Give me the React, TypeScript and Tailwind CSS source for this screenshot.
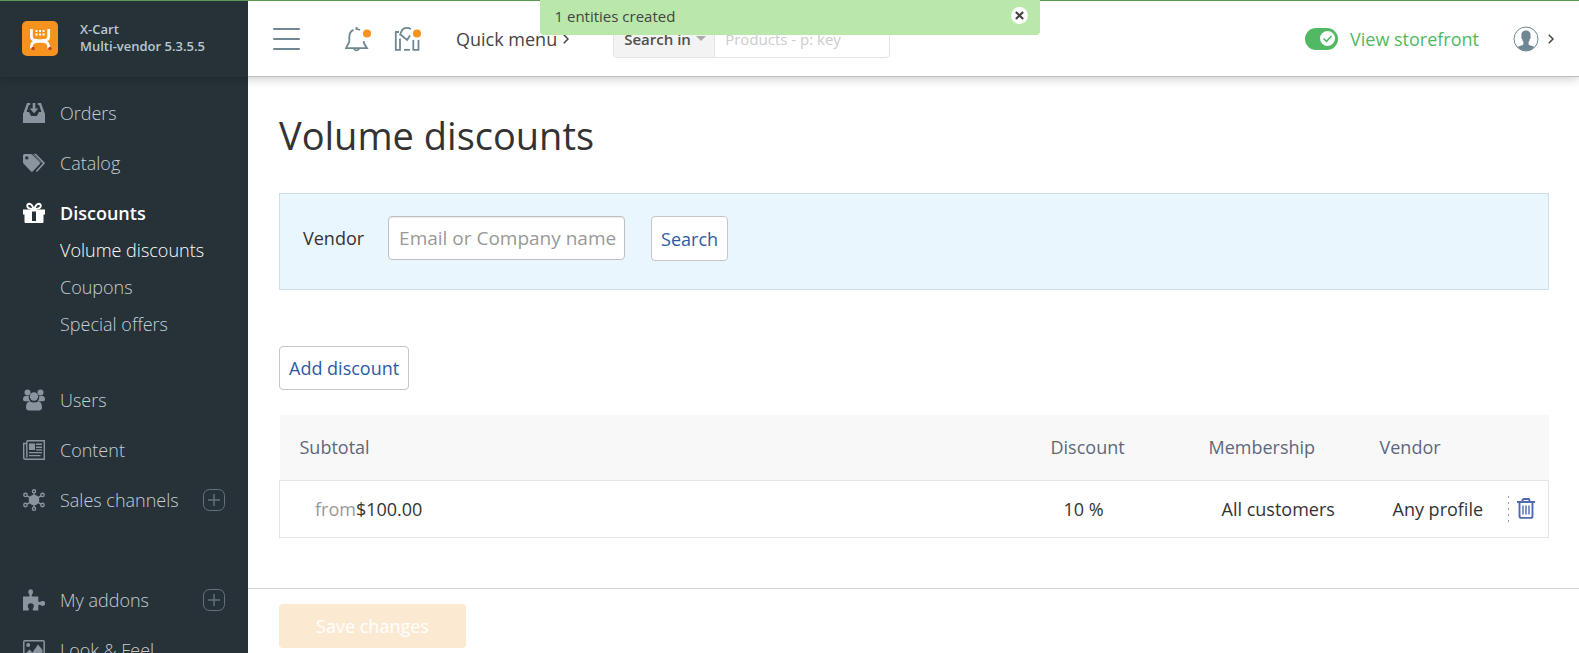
import React from 'react';

type NavItem = {
  label: string;
  icon: React.ReactNode;
  active?: boolean;
  addable?: boolean;
  separated?: boolean;
  children?: { label: string; active?: boolean }[];
};

const iconProps = { width: 22, height: 22, viewBox: '0 0 22 22', fill: 'currentColor', 'aria-hidden': true } as const;

const OrdersIcon = () => (
  <svg {...iconProps}>
    <path d="M4 1h3.200v2H5.800L3.600 10h2.400l2.200 4h5.600l2.200-4h2.400L16.200 3h-1.400V1H18l4 11v9H0v-9z" />
    <path d="M9.700 1h2.600v5.500h3L11 11.300 6.700 6.500h3z" />
  </svg>
);

const CatalogIcon = () => (
  <svg {...iconProps}>
    <path
      fillRule="evenodd"
      d="M0 3.500A1.500 1.500 0 0 1 1.500 2h6a2.500 2.500 0 0 1 1.800.7l7.300 7.400a1.500 1.500 0 0 1 0 2.100l-6.700 7a1.500 1.500 0 0 1-2.100 0L.7 11.700A2 2 0 0 1 0 10.200zm3.800.7a1.700 1.700 0 1 0 0 3.400 1.700 1.700 0 0 0 0-3.400z"
    />
    <path d="M11.500 2.500h1.200l8.300 8.600-7.600 8.400" fill="none" stroke="currentColor" strokeWidth="1.600" />
    <path d="M10 2.200l8.500 8.800" fill="none" stroke="currentColor" strokeWidth=".8" />
  </svg>
);

const DiscountsIcon = () => (
  <svg {...iconProps}>
    <path
      d="M11 7.500C9.500 3.500 7.800 1.700 6.200 1.700A2 2 0 0 0 4.300 4C4.300 6.300 7 7 11 7c4 0 6.700-.7 6.700-3a2 2 0 0 0-1.900-2.300c-1.600 0-3.300 1.800-4.800 5.800"
      fill="none"
      stroke="currentColor"
      strokeWidth="2"
    />
    <path fillRule="evenodd" d="M0 7.500h22v5h-1.500V20a1 1 0 0 1-1 1h-17a1 1 0 0 1-1-1v-7.500H0zM9 9.500V19h4V9.500z" />
  </svg>
);

const UsersIcon = () => (
  <svg {...iconProps}>
    <circle cx="4.500" cy="3.500" r="3" />
    <circle cx="17.500" cy="3.500" r="3" />
    <circle cx="11" cy="7.500" r="4.200" />
    <path d="M2.500 7h3.300c-.3 2 .3 4 1.700 5.200H1.800C.7 12.200 0 11.500 0 10.200 0 8.300.8 7 2.500 7zM19.500 7h-3.300c.3 2-.3 4-1.700 5.200h5.700c1.100 0 1.800-.7 1.800-2C22 8.300 21.200 7 19.500 7z" />
    <path d="M6.500 12.200c2.800 1.600 6.200 1.600 9 0 2.300.5 3.500 2.800 3.500 6.300 0 2-1.200 3-3 3H6c-1.800 0-3-1-3-3 0-3.500 1.200-5.800 3.500-6.300z" />
  </svg>
);

const ContentIcon = () => (
  <svg {...iconProps}>
    <path d="M4 1.700h17.300v18.600H2.500C1.400 20.300.7 19.500.7 18.500V4.500H3.500" fill="none" stroke="currentColor" strokeWidth="1.400" />
    <path d="M3.800 1.700v16.800" fill="none" stroke="currentColor" strokeWidth="1.400" />
    <path d="M6 4.500h6V11H6zM13 4.500h6V6h-6zM13 7.500h6V9h-6zM13 10.200h6v1.200h-6zM6 13h13v1.300H6zM6 16h11.500v1.300H6z" />
  </svg>
);

const ChannelsIcon = () => (
  <svg {...iconProps}>
    <circle cx="11" cy="11" r="5.300" />
    <g fill="none" stroke="currentColor" strokeWidth="1.400">
      <circle cx="11" cy="2.300" r="1.600" />
      <circle cx="11" cy="19.700" r="1.600" />
      <circle cx="2.500" cy="5.900" r="1.700" />
      <circle cx="19.500" cy="5.900" r="1.700" />
      <circle cx="2.500" cy="16" r="1.700" />
      <circle cx="19.500" cy="16" r="1.700" />
      <path d="M11 4v14M4 6.800l14 8.400M18 6.800L4 15.200" />
    </g>
  </svg>
);

const AddonsIcon = () => (
  <svg {...iconProps}>
    <path d="M0 7.500h5.300c1 0 1.500-.6 1.200-1.500C6 4.900 5.300 4 5.300 2.700a2.300 2.300 0 0 1 4.700 0C10 4 9.300 4.900 8.800 6c-.3.900.2 1.500 1.200 1.500h5.300v4.300c0 1 .6 1.500 1.500 1.200 1-.4 1.700-1.100 2.900-1.100a2.300 2.300 0 0 1 0 5c-1.200 0-1.900-.7-2.900-1.100-.9-.3-1.500.2-1.500 1.200v4.500H11c-1 0-1.500-.6-1.200-1.500.3-.9 1-1.500 1-2.700a3 3 0 0 0-6 0c0 1.200.7 1.800 1 2.700.3.900-.2 1.500-1.200 1.500H0z" />
  </svg>
);

const LookIcon = () => (
  <svg {...iconProps}>
    <rect x=".8" y="1.800" width="20.400" height="18.400" rx="1" fill="none" stroke="currentColor" strokeWidth="1.500" />
    <circle cx="5.200" cy="6" r="2" />
    <path d="M3 18v-4l3.500-3.500 3 3 5.500-8 4.500 5.500v7z" />
  </svg>
);

const navItems: NavItem[] = [
  { label: 'Orders', icon: <OrdersIcon /> },
  { label: 'Catalog', icon: <CatalogIcon /> },
  {
    label: 'Discounts',
    icon: <DiscountsIcon />,
    active: true,
    children: [{ label: 'Volume discounts', active: true }, { label: 'Coupons' }, { label: 'Special offers' }],
  },
  { label: 'Users', icon: <UsersIcon /> },
  { label: 'Content', icon: <ContentIcon /> },
  { label: 'Sales channels', icon: <ChannelsIcon />, addable: true },
  { label: 'My addons', icon: <AddonsIcon />, addable: true, separated: true },
  { label: 'Look & Feel', icon: <LookIcon /> },
];

function Logo() {
  return (
    <svg width="36" height="35" viewBox="0 0 36 35" aria-hidden="true">
      <rect width="36" height="35" rx="5" fill="#f6921e" />
      <g fill="none" stroke="#fff" strokeWidth="2.800">
        <path d="M9.400 8v7.500c0 2 .9 3 2.700 3.500 2 .6 3 1 6 1s4-.4 6-1c1.800-.5 2.600-1.500 2.600-3.500V8" />
        <path d="M9.400 27.500v-2.200c0-3 3-5.300 8.700-5.300s8.600 2.300 8.600 5.300v2.200" />
      </g>
      <path
        d="M13.500 9h2v2h-2zM17 9h2v2h-2zM20.500 9h2v2h-2zM13.500 12.500h2v2h-2zM17 12.500h2v2h-2zM20.500 12.500h2v2h-2z"
        fill="#fff"
      />
      <circle cx="11" cy="27.500" r="1.700" fill="#c1481c" />
      <circle cx="28" cy="27.500" r="1.700" fill="#c1481c" />
    </svg>
  );
}

function Chevron() {
  return (
    <svg width="6" height="10" viewBox="0 0 6 10" fill="none" stroke="#444" strokeWidth="1.500" aria-hidden="true">
      <path d="M.8.800L5 5 .8 9.200" />
    </svg>
  );
}

function Sidebar() {
  return (
    <nav aria-label="Main" className="w-[248px] shrink-0 overflow-hidden bg-[#263238] pt-[23px]">
      <ul className="flex flex-col gap-6">
        {navItems.map((item) => (
          <li key={item.label} className={item.separated ? 'mt-[50px]' : item.children ? 'pb-[21px]' : ''}>
            <div className="flex h-[26px] items-center px-[23px]">
              <a
                href="#"
                className={
                  item.active
                    ? 'flex flex-1 items-center gap-[15px] font-semibold text-white'
                    : 'flex flex-1 items-center gap-[15px] font-light text-[#c5ced6]'
                }
              >
                <span className={item.active ? 'text-white' : 'text-[#8b949e]'}>{item.icon}</span>
                {item.label}
              </a>
              {item.addable && (
                <button type="button" aria-label={`Add to ${item.label}`} className="text-[#66727a]">
                  <svg width="22" height="22" viewBox="0 0 22 22" fill="none" stroke="currentColor" aria-hidden="true">
                    <rect x=".5" y=".5" width="21" height="21" rx="6" />
                    <path d="M11 5v12M5 11h12" strokeWidth="1.400" />
                  </svg>
                </button>
              )}
            </div>
            {item.children && (
              <ul className="mt-[5px] pl-[60px]">
                {item.children.map((child) => (
                  <li key={child.label} className="flex h-[37px] items-center">
                    <a href="#" className={child.active ? 'font-light text-white' : 'font-light text-[#c5ced6]'}>
                      {child.label}
                    </a>
                  </li>
                ))}
              </ul>
            )}
          </li>
        ))}
      </ul>
    </nav>
  );
}

function Header() {
  return (
    <header className="relative z-10 flex h-[77px] shrink-0 border-t border-[#5a9a55] bg-white shadow-[0_2px_10px_rgba(0,0,0,0.2)]">
      <div className="flex w-[248px] shrink-0 items-center gap-[22px] bg-[#263238] pb-[2px] pl-[22px]">
        <Logo />
        <p className="text-[13px] leading-[17px] font-semibold text-[#b9c9d2]">
          X-Cart
          <br />
          Multi-vendor 5.3.5.5
        </p>
      </div>
      <div className="flex min-w-0 flex-1 items-center border-b border-[#b9c0bf] px-[25px]">
        <button type="button" aria-label="Toggle menu">
          <svg width="27" height="24" viewBox="0 0 27 24" stroke="#6f8793" strokeWidth="2" strokeLinecap="round" aria-hidden="true">
            <path d="M1 2h25M1 12h25M1 22h25" />
          </svg>
        </button>
        <button type="button" aria-label="Notifications" className="ml-[45px]">
          <svg width="27" height="26" viewBox="0 0 27 26" fill="none" stroke="#6f8793" strokeWidth="1.800" aria-hidden="true">
            <path d="M11.500 4V1M8.500 3.900C5.500 5.200 4.300 7.800 4.300 11v5L1 22.200h21L18.800 17v-2M8.700 22.500a3 2.800 0 0 0 5.600 0M12 3l3 1" />
            <circle cx="22" cy="7.500" r="4" fill="#f6921e" stroke="none" />
          </svg>
        </button>
        <button type="button" aria-label="Marketplace" className="ml-[22px]">
          <svg width="28" height="26" viewBox="0 0 28 26" fill="none" stroke="#6f8793" strokeWidth="1.800" aria-hidden="true">
            <path d="M6 12.500v11.300H1.800V6H5M6.500 8.500l6.600 5.500L16 9.500M6 9.500C7 4.500 9.500 1.800 12.500 1.800c2 0 3.300.4 4.500 1.300M10 23.800h6M19.300 14v9.800h5.200V14" />
            <circle cx="23" cy="7.500" r="4" fill="#f6921e" stroke="none" />
          </svg>
        </button>
        <button type="button" className="ml-[34px] flex items-center gap-[6px] whitespace-nowrap text-[#444]">
          Quick menu <Chevron />
        </button>
        <form role="search" className="ml-11 flex h-[38px] w-[277px] overflow-hidden rounded border border-[#e3e3e3] text-[15px]">
          <button
            type="button"
            className="flex w-[101px] shrink-0 items-center justify-between border-r border-[#e3e3e3] bg-[#f3f3f3] pr-2 pl-[10px] font-semibold whitespace-nowrap text-[#4f4f4f]"
          >
            Search in
            <svg width="10" height="5" viewBox="0 0 10 5" fill="#aaa" aria-hidden="true">
              <path d="M0 0h10L5 5z" />
            </svg>
          </button>
          <input
            type="text"
            aria-label="Search products"
            placeholder="Products - p: key"
            className="w-full min-w-0 px-[10px] outline-none placeholder:text-[#ccc]"
          />
        </form>
        <div className="ml-auto flex items-center">
          <a href="#" className="flex items-center gap-3 whitespace-nowrap text-[#51b963]">
            <svg width="33" height="22" viewBox="0 0 33 22" aria-hidden="true">
              <rect width="33" height="22" rx="11" fill="#51b963" />
              <circle cx="22.500" cy="10.500" r="7.500" fill="#fff" />
              <path d="M18.500 10.500l3 2.800 5-5.300" fill="none" stroke="#51b963" strokeWidth="1.600" />
            </svg>
            View storefront
          </a>
          <button type="button" aria-label="Account" className="ml-[34px] flex items-center gap-[9px]">
            <svg width="26" height="26" viewBox="0 0 26 26" aria-hidden="true">
              <circle cx="13" cy="13" r="12" fill="#fff" stroke="#6f8793" />
              <path
                d="M13 4.500c3 0 4.600 1.700 4.600 4.500 0 .6-.1 1-.2 1.400.5.100.5 1.900-.5 2.600-.2 1.300-.7 2.200-1.300 2.900v2.600c1.500 1 4 1.200 6 2.600A12 12 0 0 1 4.400 21.100c2-1.400 4.500-1.600 6-2.600v-2.600c-.6-.7-1.100-1.600-1.300-2.900-1-.7-1-2.500-.5-2.600-.1-.4-.2-.8-.2-1.400 0-2.800 1.600-4.500 4.600-4.500z"
                fill="#6f8793"
              />
            </svg>
            <Chevron />
          </button>
        </div>
      </div>
    </header>
  );
}

function Toast() {
  return (
    <div
      role="status"
      className="absolute top-0 left-1/2 z-20 flex h-[35px] w-[500px] -translate-x-1/2 items-center justify-between rounded-b bg-[#b9e8aa] pr-3 pb-1 pl-[15px] text-[15px] text-[#444]"
    >
      <span>1 entities created</span>
      <button type="button" aria-label="Close" className="flex size-[17px] items-center justify-center rounded-full bg-white">
        <svg width="9" height="9" viewBox="0 0 10 10" stroke="#444" strokeWidth="2.400" aria-hidden="true">
          <path d="M1 1l8 8M9 1L1 9" />
        </svg>
      </button>
    </div>
  );
}

function DiscountTable() {
  return (
    <table className="mt-[25px] w-full table-fixed border-collapse text-left">
      <colgroup>
        <col />
        <col className="w-[158px]" />
        <col className="w-[171px]" />
        <col className="w-[148px]" />
        <col className="w-[41px]" />
      </colgroup>
      <thead>
        <tr className="h-[65px] bg-[#f8f8f8] text-[#60677d]">
          <th className="pl-5 font-normal">Subtotal</th>
          <th className="pl-5 font-normal">Discount</th>
          <th className="pl-5 font-normal">Membership</th>
          <th className="pl-5 font-normal">Vendor</th>
          <th aria-label="Actions" />
        </tr>
      </thead>
      <tbody>
        <tr className="h-[57px] border border-[#e5e5e5] text-[#333]">
          <td className="pl-[35px]">
            <span className="text-[#999]">from</span>$100.00
          </td>
          <td className="pl-[33px]">10 %</td>
          <td className="pl-[33px]">All customers</td>
          <td className="pl-[33px]">Any profile</td>
          <td>
            <div className="flex items-center gap-2">
              <span className="h-[26px] w-px bg-[repeating-linear-gradient(to_bottom,#999_0_2px,transparent_2px_6px)]" />
              <button type="button" aria-label="Delete">
                <svg width="18" height="21" viewBox="0 0 18 21" fill="none" stroke="#5069b0" strokeWidth="1.900" aria-hidden="true">
                  <path d="M0 4h18M5.500 4V2.500C5.500 1.500 6 1 7 1h4c1 0 1.500.5 1.500 1.500V4M2.500 4v14c0 1.300.6 1.900 1.800 1.900h9.400c1.200 0 1.800-.6 1.800-1.900V4" />
                  <path d="M6 7.500v9M9 7.500v9M12 7.500v9" strokeWidth="1.400" />
                </svg>
              </button>
            </div>
          </td>
        </tr>
      </tbody>
    </table>
  );
}

export default function App() {
  return (
    <div className="relative flex h-screen flex-col overflow-hidden bg-white font-['Open_Sans','Noto_Sans',sans-serif] text-lg leading-[26px] text-[#333]">
      <Header />
      <Toast />
      <div className="flex min-h-0 flex-1">
        <Sidebar />
        <div className="flex min-w-0 flex-1 flex-col">
          <main className="min-h-0 flex-1 overflow-hidden pt-8 pr-[30px] pl-[31px]">
            <h1 className="text-[38px] leading-[52px]">Volume discounts</h1>
            <form className="mt-8 flex h-[97px] items-start border border-[#cfdfe8] bg-[#e9f6fe] pt-[22px] pl-[23px]">
              <label htmlFor="vendor" className="mt-[9px]">
                Vendor
              </label>
              <input
                id="vendor"
                type="text"
                placeholder="Email or Company name"
                className="ml-6 h-11 w-[237px] rounded border border-[#bfbfbf] bg-white pr-1 pl-[10px] text-[19px] shadow-[inset_0_1px_1px_rgba(0,0,0,0.08)] outline-none placeholder:text-[#999]"
              />
              <button type="button" className="ml-[26px] h-[45px] rounded border border-[#c6c6c6] bg-white px-[9px] text-[#2b5ba6]">
                Search
              </button>
            </form>
            <button type="button" className="mt-14 block h-11 rounded border border-[#c6c6c6] bg-white px-[9px] text-[#2b5ba6]">
              Add discount
            </button>
            <DiscountTable />
          </main>
          <footer className="shrink-0 border-t border-[#d6d6d6] pt-[15px] pb-[5px] pl-[31px]">
            <button type="button" disabled className="h-11 w-[187px] rounded bg-[#fce9d2] font-medium text-white">
              Save changes
            </button>
          </footer>
        </div>
      </div>
    </div>
  );
}
